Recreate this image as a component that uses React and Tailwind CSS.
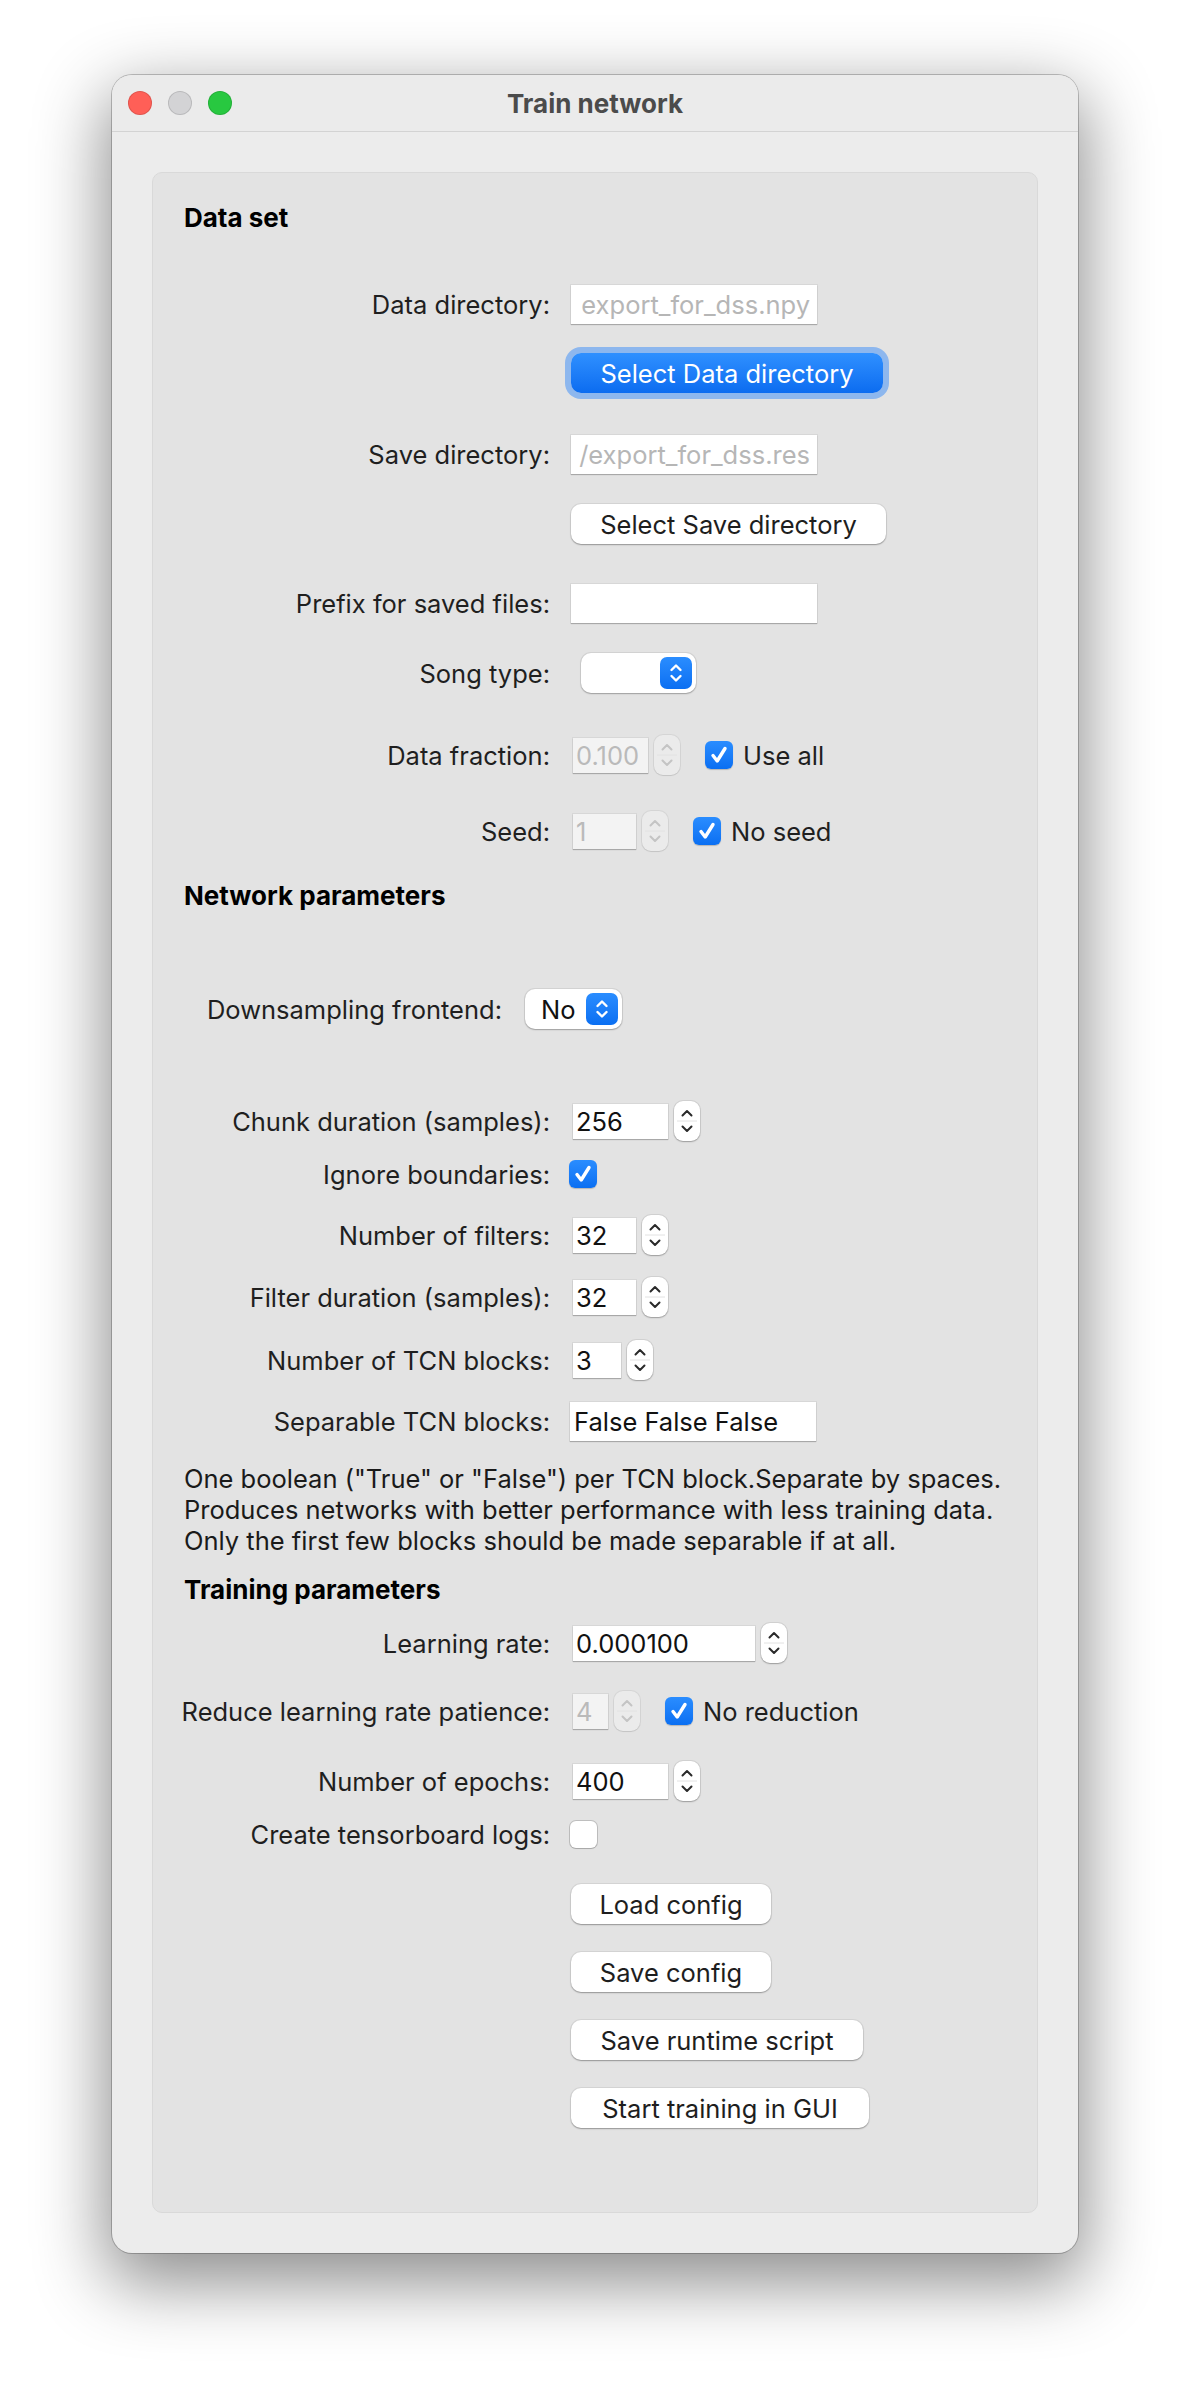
import React from "react";

const Chevrons = ({ color = "#2a2a2a" }) => (
  <svg width="26" height="40" viewBox="0 0 26 40" className="block">
    <path d="M8.5 14.5 L13 10 L17.5 14.5" fill="none" stroke={color} strokeWidth="2" strokeLinecap="round" strokeLinejoin="round" />
    <line x1="3" y1="20" x2="23" y2="20" stroke="#e2e2e2" strokeWidth="1" />
    <path d="M8.5 25.5 L13 30 L17.5 25.5" fill="none" stroke={color} strokeWidth="2" strokeLinecap="round" strokeLinejoin="round" />
  </svg>
);

const Stepper = ({ disabled }) => (
  <div
    className={`ml-[6px] h-[40px] w-[26px] shrink-0 overflow-hidden rounded-[9px] ${
      disabled
        ? "bg-[#ebebeb] shadow-[0_0_0_1px_rgba(0,0,0,0.06),0_1px_1px_rgba(0,0,0,0.08)]"
        : "bg-white shadow-[0_0_0_1px_rgba(0,0,0,0.08),0_1px_1.5px_rgba(0,0,0,0.25)]"
    }`}
  >
    <Chevrons color={disabled ? "#c4c4c4" : "#2a2a2a"} />
  </div>
);

const Spin = ({ value, w, disabled }) => (
  <div className="ml-[2px] flex items-center">
    <div
      className={`${w} flex h-[35px] items-center overflow-hidden pl-[3px] shadow-[0_0_0_1px_rgba(0,0,0,0.05),0_1px_1px_rgba(0,0,0,0.22)] ${
        disabled ? "bg-[#f3f3f3] text-[#bababa]" : "bg-white text-[#111]"
      }`}
    >
      {value}
    </div>
    <Stepper disabled={disabled} />
  </div>
);

const Check = ({ on = true }) =>
  on ? (
    <div className="flex h-[28px] w-[28px] shrink-0 items-center justify-center rounded-[6px] bg-gradient-to-b from-[#2a8dff] to-[#0a6ff2] shadow-[0_1px_1px_rgba(0,0,0,0.2)]">
      <svg width="28" height="28" viewBox="0 0 28 28">
        <path d="M8 14.5 L12.2 20 L20 7.5" fill="none" stroke="white" strokeWidth="3.4" strokeLinecap="round" strokeLinejoin="round" />
      </svg>
    </div>
  ) : (
    <div className="h-[27px] w-[27px] shrink-0 rounded-[6px] bg-white shadow-[0_0_0_1px_rgba(0,0,0,0.16),0_1px_1px_rgba(0,0,0,0.12)]" />
  );

const CheckText = ({ children }) => (
  <div className="ml-[25px] flex items-center">
    <Check />
    <span className="ml-[10px]">{children}</span>
  </div>
);

const TextField = ({ children, muted }) => (
  <div
    className={`flex h-[39px] w-[246px] items-center whitespace-nowrap bg-white shadow-[0_0_0_1px_rgba(0,0,0,0.05),0_1px_1px_rgba(0,0,0,0.22)] ${
      muted ? "justify-end pr-[7px] text-[#b6b6b6]" : "pl-[4px] text-[#111]"
    }`}
  >
    {children}
  </div>
);

const Combo = ({ w, children }) => (
  <div className={`${w} flex h-[40px] items-center justify-between rounded-[10px] bg-white pl-[16px] pr-[4px] shadow-[0_0_0_1px_rgba(0,0,0,0.07),0_1px_1.5px_rgba(0,0,0,0.25)]`}>
    <span className="text-[#111]">{children}</span>
    <div className="flex h-[32px] w-[32px] items-center justify-center rounded-[7px] bg-gradient-to-b from-[#2a8dff] to-[#0a6ff2]">
      <svg width="32" height="32" viewBox="0 0 32 32">
        <path d="M11.5 13 L16 8.5 L20.5 13" fill="none" stroke="white" strokeWidth="2.4" strokeLinecap="round" strokeLinejoin="round" />
        <path d="M11.5 19 L16 23.5 L20.5 19" fill="none" stroke="white" strokeWidth="2.4" strokeLinecap="round" strokeLinejoin="round" />
      </svg>
    </div>
  </div>
);

const Button = ({ w, children }) => (
  <div className={`${w} flex h-[40px] items-center justify-center rounded-[10px] bg-white text-[#1e1e1e] shadow-[0_0_0_1px_rgba(0,0,0,0.06),0_1px_1.5px_rgba(0,0,0,0.3)]`}>
    {children}
  </div>
);

const Row = ({ mt, label, children, labelW = "w-[397px]", gap = "ml-[21px]" }) => (
  <div className={`flex h-[40px] items-center ${mt}`}>
    <div className={`${labelW} shrink-0 whitespace-nowrap text-right`}>{label}</div>
    <div className={`flex items-center ${gap}`}>{children}</div>
  </div>
);

const Heading = ({ mt, children }) => (
  <div className={`h-[30px] pl-[31px] text-[26px] font-bold leading-[30px] text-black ${mt}`}>{children}</div>
);

const App = () => {
  return (
    <div className="min-h-[2402px] w-full bg-white pt-[75px] font-['Inter','Liberation_Sans',sans-serif] text-[25.5px] leading-[31px] text-[#1f1f1f]">
      <div className="mx-auto w-[966px] overflow-hidden rounded-[20px] bg-[#ececec] shadow-[0_0_0_1px_rgba(0,0,0,0.22),0_24px_70px_6px_rgba(0,0,0,0.45)]">
        {/* title bar */}
        <div className="grid h-[57px] grid-cols-[1fr_auto_1fr] items-center border-b border-[#d3d3d3] bg-[#ebebeb]">
          <div className="flex items-center gap-[16px] pl-[16px]">
            <div className="h-[24px] w-[24px] rounded-full bg-[#ff5f57] shadow-[inset_0_0_0_1px_rgba(0,0,0,0.12)]" />
            <div className="h-[24px] w-[24px] rounded-full bg-[#d3d3d5] shadow-[inset_0_0_0_1px_rgba(0,0,0,0.12)]" />
            <div className="h-[24px] w-[24px] rounded-full bg-[#28c840] shadow-[inset_0_0_0_1px_rgba(0,0,0,0.12)]" />
          </div>
          <div className="text-[26px] font-bold text-[#4b4b4b]">Train network</div>
          <div />
        </div>

        <div className="px-[40px] pb-[40px] pt-[40px]">
          <div className="rounded-[10px] border border-[#d9d9d9] bg-[#e3e3e3] pb-[84px]">
            <Heading mt="mt-[30px]">Data set</Heading>

            <Row mt="mt-[51px]" label="Data directory:">
              <TextField muted>export_for_dss.npy</TextField>
            </Row>
            <Row mt="mt-[29px]" label="">
              <div className="flex h-[40px] w-[312px] items-center justify-center rounded-[10px] bg-gradient-to-b from-[#2f90ff] to-[#0b6cf0] text-white shadow-[0_0_0_6px_#8db7ee]">
                Select Data directory
              </div>
            </Row>

            <Row mt="mt-[41px]" label="Save directory:">
              <TextField muted>/export_for_dss.res</TextField>
            </Row>
            <Row mt="mt-[30px]" label="">
              <Button w="w-[315px]">Select Save directory</Button>
            </Row>

            <Row mt="mt-[39px]" label="Prefix for saved files:">
              <TextField />
            </Row>
            <Row mt="mt-[30px]" label="Song type:" gap="ml-[31px]">
              <Combo w="w-[115px]" />
            </Row>

            <Row mt="mt-[42px]" label="Data fraction:">
              <Spin value="0.100" w="w-[75px]" disabled />
              <CheckText>Use all</CheckText>
            </Row>
            <Row mt="mt-[36px]" label="Seed:">
              <Spin value="1" w="w-[63px]" disabled />
              <CheckText>No seed</CheckText>
            </Row>

            <Heading mt="mt-[30px]">Network parameters</Heading>

            <Row mt="mt-[78px]" label="Downsampling frontend:" labelW="w-[349px]" gap="ml-[23px]">
              <Combo w="w-[97px]">No</Combo>
            </Row>

            <Row mt="mt-[72px]" label="Chunk duration (samples):">
              <Spin value="256" w="w-[95px]" />
            </Row>
            <Row mt="mt-[13px]" label="Ignore boundaries:" gap="ml-[19px]">
              <Check />
            </Row>
            <Row mt="mt-[21px]" label="Number of filters:">
              <Spin value="32" w="w-[63px]" />
            </Row>
            <Row mt="mt-[22px]" label="Filter duration (samples):">
              <Spin value="32" w="w-[63px]" />
            </Row>
            <Row mt="mt-[23px]" label="Number of TCN blocks:">
              <Spin value="3" w="w-[48px]" />
            </Row>
            <Row mt="mt-[21px]" label="Separable TCN blocks:" gap="ml-[20px]">
              <TextField>False False False</TextField>
            </Row>

            <div className="mt-[22px] pl-[31px] text-[#1a1a1a]">
              <div>One boolean ("True" or "False") per TCN block.Separate by spaces.</div>
              <div>Produces networks with better performance with less training data.</div>
              <div>Only the first few blocks should be made separable if at all.</div>
            </div>

            <Heading mt="mt-[19px]">Training parameters</Heading>

            <Row mt="mt-[18px]" label="Learning rate:">
              <Spin value="0.000100" w="w-[182px]" />
            </Row>
            <Row mt="mt-[28px]" label="Reduce learning rate patience:">
              <Spin value="4" w="w-[35px]" disabled />
              <CheckText>No reduction</CheckText>
            </Row>
            <Row mt="mt-[30px]" label="Number of epochs:">
              <Spin value="400" w="w-[95px]" />
            </Row>
            <Row mt="mt-[13px]" label="Create tensorboard logs:" gap="ml-[20px]">
              <Check on={false} />
            </Row>

            <Row mt="mt-[30px]" label="">
              <Button w="w-[200px]">Load config</Button>
            </Row>
            <Row mt="mt-[28px]" label="">
              <Button w="w-[200px]">Save config</Button>
            </Row>
            <Row mt="mt-[28px]" label="">
              <Button w="w-[292px]">Save runtime script</Button>
            </Row>
            <Row mt="mt-[28px]" label="">
              <Button w="w-[298px]">Start training in GUI</Button>
            </Row>
          </div>
        </div>
      </div>
    </div>
  );
};

export default App;
